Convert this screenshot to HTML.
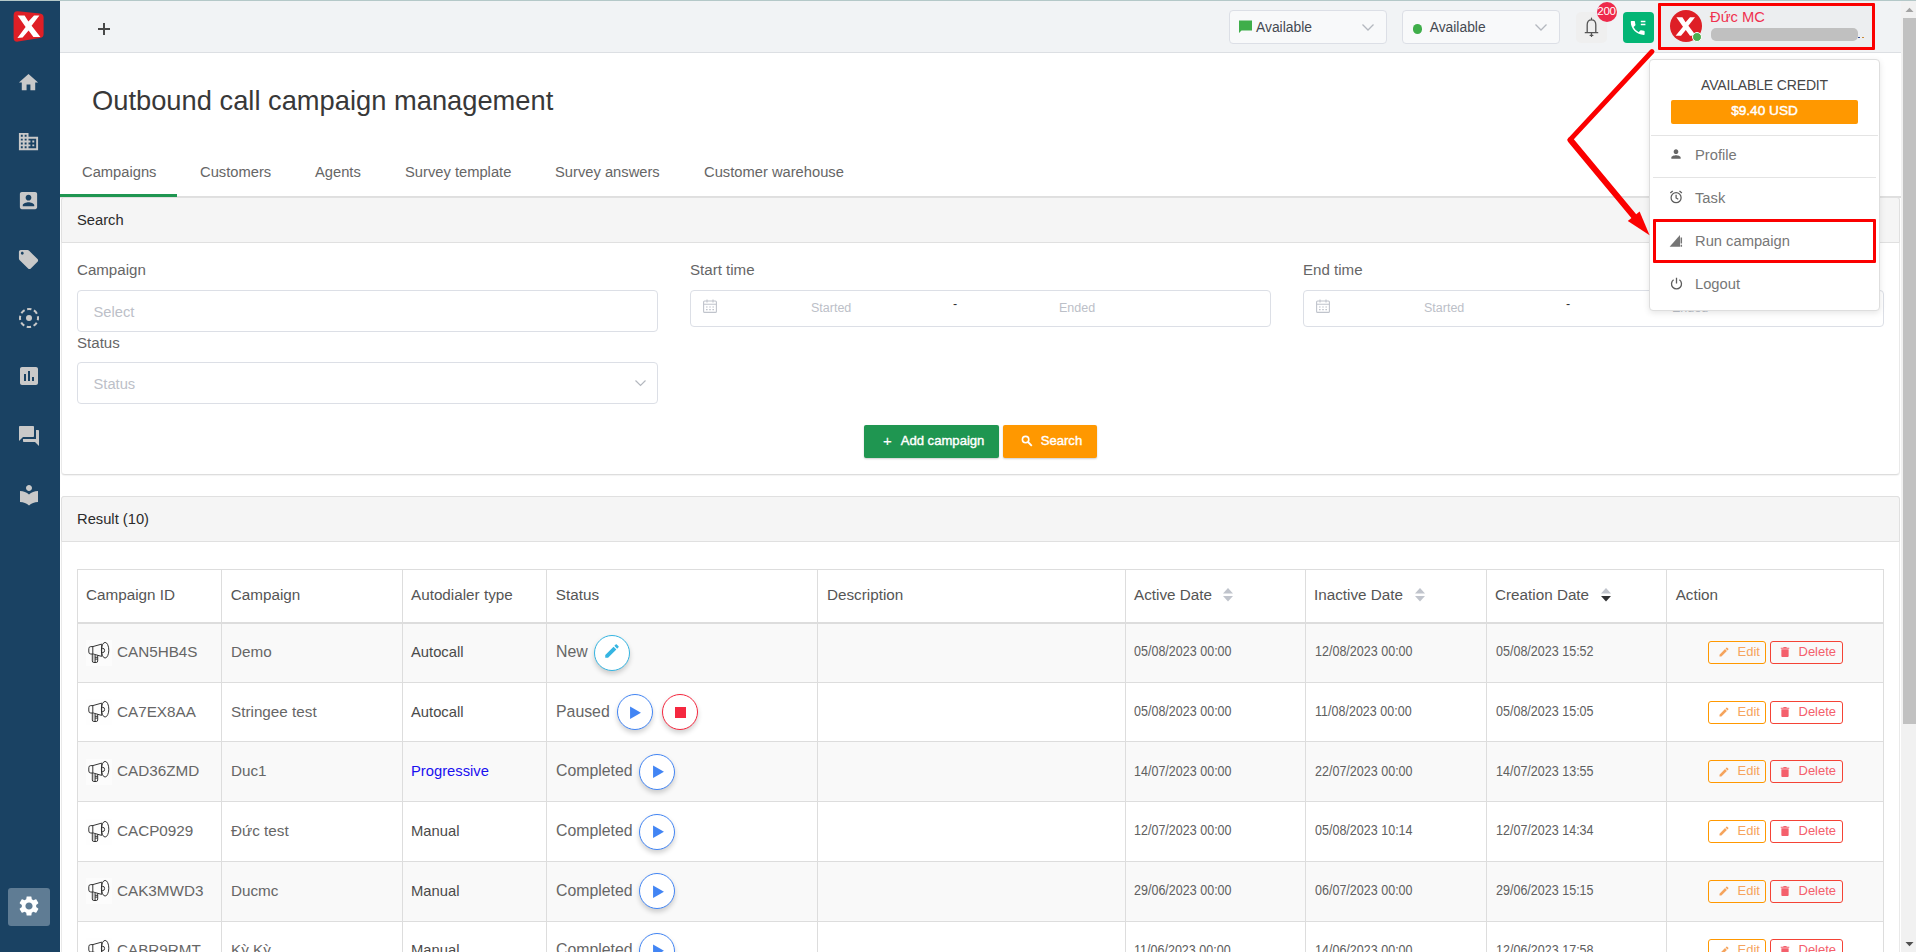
<!DOCTYPE html>
<html lang="en">
<head>
<meta charset="utf-8">
<title>Outbound call campaign management</title>
<style>
*{box-sizing:border-box;margin:0;padding:0}
html,body{width:1916px;height:952px;overflow:hidden;background:#fff}
body{font-family:"Liberation Sans",sans-serif;color:#606266;position:relative;font-size:15px}
.abs{position:absolute}
#topline{left:0;top:0;width:1916px;height:1px;background:#b4c8c8;z-index:50}
#sidebar{left:0;top:0;width:60px;height:952px;background:#1a4263}
#sidebar svg{position:absolute;fill:#c9c9c9}
#header{left:60px;top:0;width:1841px;height:53px;background:#f1f3f5;border-bottom:1px solid #dcdfe3}
#main{left:60px;top:53px;width:1840px;height:899px;background:#fff;overflow:hidden}
/* scrollbar */
#sb{left:1901px;top:0;width:15px;height:952px;background:#f1f1f1}
#sbthumb{left:1903px;top:18px;width:13px;height:706px;background:#c1c1c1}
/* header controls */
.hsel{top:10px;width:158px;height:34px;border:1px solid #dcdfe6;border-radius:4px;background:#f8f9fa;font-size:13.850px;color:#454a52}
.hsel span{position:absolute;top:8px;left:26px;line-height:16px}
.hsel svg{position:absolute}
/* page */
#title{left:92px;top:84px;font-size:27.3px;line-height:34px;color:#383838;white-space:nowrap}
.tab{top:163px;font-size:14.72px;line-height:18px;color:#666;white-space:nowrap}
#tabline{left:60px;top:196px;width:1841px;height:2px;background:#dfdfdf}
#tabactive{left:60px;top:194px;width:117px;height:3px;background:#1f9651}
.panelhead{left:61px;width:1839px;height:45.500px;background:#f5f5f5;border:1px solid #e0e0e0;border-radius:3px 3px 0 0;font-size:14.72px;color:#2b2b2b}
.panelhead span{position:absolute;left:15px;top:13px;line-height:18px}
.lbl{font-size:15.100px;line-height:18px;color:#666;white-space:nowrap}
.inp{height:42px;border:1px solid #dcdfe6;border-radius:4px;background:#fff;width:581px}
.inp .ph{position:absolute;left:15.500px;top:11.500px;font-size:14.720px;line-height:18px;color:#bcc0c8}
.drange{height:37px;border:1px solid #dcdfe6;border-radius:4px;background:#fff;width:581px;font-size:12.5px;color:#bcc0c8}
.drange span{position:absolute;top:10px;line-height:14px}
.btn{top:425px;height:33px;border-radius:2px;color:#fff;font-size:13.100px;font-weight:normal;-webkit-text-stroke:0.400px #fff;white-space:nowrap;box-shadow:0 1px 2px rgba(0,0,0,.2)}
.hl{left:77px;width:1807px;height:1px;background:#dddddd}
.vl{top:569px;width:1px;height:400px;background:#dddddd}
.th{top:586px;font-size:15.250px;line-height:18px;color:#555;white-space:nowrap}
.td{font-size:15.250px;line-height:18px;color:#666;white-space:nowrap}
.dt{font-size:14px;line-height:18px;color:#606060;white-space:nowrap;transform:scaleX(.895);transform-origin:0 50%}
.cb{width:36px;height:36px;border-radius:50%;border:1px solid;background:#fff;box-shadow:0 3px 5px rgba(0,0,0,.18)}
.ab{height:23px;border:1px solid;border-radius:3px;font-size:13px;background:transparent}
.ab span{position:absolute;top:2.200px;line-height:15px}
.mi{left:1695px;font-size:14.720px;line-height:18px;color:#777;white-space:nowrap}
</style>
</head>
<body>
<div id="sidebar" class="abs">
<svg style="left:13px;top:10px;fill:none" width="32" height="33" viewBox="0 0 32 33"><path d="M5 1.2 L27 3.6 Q30.6 4 30.6 7.6 L30.6 24 Q30.6 27.4 27 28 L5 31.6 Q0.6 32 0.6 28 L0.6 5.4 Q0.6 0.8 5 1.2Z" fill="#df1f26"/><path d="M4.6 5.6 L11.6 5.6 L15.4 11.6 L21 5.6 L26.4 5.6 L18.6 15.8 L27.4 27 L20.4 27 L15.6 20.4 L9.6 27.4 L4.4 28 L12.6 17 Z" fill="#fff"/></svg>
<svg style="left:17.300px;top:70.6px" width="23" height="23" viewBox="0 0 24 24"><path d="M10 20v-6h4v6h5v-8h3L12 3 2 12h3v8z"/></svg>
<svg style="left:17.300px;top:129.6px" width="23" height="23" viewBox="0 0 24 24"><path d="M12 7V3H2v18h20V7H12zM6 19H4v-2h2v2zm0-4H4v-2h2v2zm0-4H4V9h2v2zm0-4H4V5h2v2zm4 12H8v-2h2v2zm0-4H8v-2h2v2zm0-4H8V9h2v2zm0-4H8V5h2v2zm10 12h-8v-2h2v-2h-2v-2h2v-2h-2V9h8v10zm-2-8h-2v2h2v-2zm0 4h-2v2h2v-2z"/></svg>
<svg style="left:17.300px;top:188.6px" width="23" height="23" viewBox="0 0 24 24"><path d="M3 5v14c0 1.100.89 2 2 2h14c1.100 0 2-.9 2-2V5c0-1.100-.9-2-2-2H5c-1.110 0-2 .9-2 2zm12 4c0 1.660-1.340 3-3 3s-3-1.340-3-3 1.340-3 3-3 3 1.340 3 3zm-9 8c0-2 4-3.100 6-3.100s6 1.100 6 3.100v1H6v-1z"/></svg>
<svg style="left:17.300px;top:247.6px" width="23" height="23" viewBox="0 0 24 24"><path d="M21.410 11.580l-9-9C12.050 2.220 11.550 2 11 2H4c-1.100 0-2 .9-2 2v7c0 .55.220 1.050.59 1.420l9 9c.36.360.86.580 1.410.580.550 0 1.050-.220 1.410-.59l7-7c.370-.360.590-.860.590-1.410 0-.550-.23-1.060-.59-1.420zM5.500 7C4.670 7 4 6.330 4 5.500S4.670 4 5.500 4 7 4.670 7 5.500 6.330 7 5.500 7z"/></svg>
<svg style="left:16.700px;top:305.500px;fill:none;stroke:#c9c9c9" width="24" height="24" viewBox="0 0 24 24"><circle cx="12" cy="12" r="9" stroke-width="2" stroke-dasharray="4.400 2.670" stroke-dashoffset="2.200"/><circle cx="12" cy="12" r="3" fill="#c9c9c9" stroke="none"/></svg>
<svg style="left:16.800px;top:364.300px" width="24" height="24" viewBox="0 0 24 24"><path d="M19 3H5c-1.100 0-2 .9-2 2v14c0 1.100.9 2 2 2h14c1.100 0 2-.9 2-2V5c0-1.100-.9-2-2-2zM9 17H7v-7h2v7zm4 0h-2V7h2v10zm4 0h-2v-4h2v4z"/></svg>
<svg style="left:16.800px;top:423.500px" width="24" height="24" viewBox="0 0 24 24"><path d="M21 6h-2v9H6v2c0 .55.450 1 1 1h11l4 4V7c0-.55-.45-1-1-1zm-4 6V3c0-.55-.45-1-1-1H3c-.55 0-1 .45-1 1v14l4-4h10c.550 0 1-.45 1-1z"/></svg>
<svg style="left:16.800px;top:482.800px" width="24" height="24" viewBox="0 0 24 24"><path d="M12 11.550C9.640 9.350 6.480 8 3 8v11c3.480 0 6.640 1.350 9 3.550 2.360-2.190 5.520-3.550 9-3.550V8c-3.480 0-6.640 1.350-9 3.550zM12 8c1.660 0 3-1.340 3-3s-1.340-3-3-3-3 1.340-3 3 1.340 3 3 3z"/></svg>
<div class="abs" style="left:8px;top:888px;width:42px;height:38px;background:#5f7c94;border-radius:3px"></div>
<svg style="left:16.800px;top:894.300px;fill:#fff" width="24" height="24" viewBox="0 0 24 24"><path d="M19.140 12.940c.04-.3.060-.61.060-.940 0-.320-.020-.640-.070-.940l2.030-1.580c.180-.140.230-.410.120-.610l-1.920-3.320c-.12-.22-.37-.29-.59-.22l-2.390.96c-.5-.38-1.030-.7-1.620-.94l-.36-2.540c-.04-.24-.24-.41-.48-.41h-3.840c-.24 0-.43.170-.47.410l-.36 2.540c-.59.240-1.130.570-1.620.94l-2.390-.96c-.22-.08-.47 0-.59.220L2.740 8.870c-.12.210-.08.470.12.610l2.030 1.580c-.05.300-.09.630-.09.940s.020.640.070.940l-2.030 1.580c-.18.140-.23.410-.12.610l1.920 3.320c.12.220.37.290.59.220l2.390-.96c.5.380 1.030.7 1.620.94l.36 2.540c.05.240.24.410.48.410h3.840c.24 0 .44-.17.470-.41l.36-2.540c.59-.24 1.130-.56 1.620-.94l2.390.96c.22.080.47 0 .59-.22l1.920-3.320c.12-.22.070-.47-.12-.61l-2.010-1.580zM12 15.600c-1.980 0-3.600-1.620-3.600-3.600s1.620-3.600 3.600-3.600 3.600 1.620 3.600 3.600-1.620 3.600-3.600 3.600z"/></svg>
</div>
<div id="header" class="abs"></div>
<div class="abs" style="left:97.500px;top:22.500px;width:12.500px;height:12.500px"><div class="abs" style="left:0;top:5.450px;width:12.500px;height:1.600px;background:#484848"></div><div class="abs" style="left:5.450px;top:0;width:1.600px;height:12.500px;background:#484848"></div></div>
<div class="abs hsel" style="left:1229px"><svg style="left:8px;top:8px" width="15" height="15" viewBox="0 0 15 15"><path d="M1 1.500h13v10H3.500L1 14z" fill="#3fae4a"/></svg><span>Available</span><svg style="left:131px;top:12px" width="14" height="9" viewBox="0 0 14 9"><path d="M1.500 1.500l5.500 5.500 5.500-5.500" fill="none" stroke="#b4b8bf" stroke-width="1.300"/></svg></div>
<div class="abs hsel" style="left:1402px"><div class="abs" style="left:9.700px;top:13.200px;width:9.600px;height:9.600px;border-radius:50%;background:#3fae4a"></div><span style="left:26.700px">Available</span><svg style="left:131px;top:12px" width="14" height="9" viewBox="0 0 14 9"><path d="M1.500 1.500l5.500 5.500 5.500-5.500" fill="none" stroke="#b4b8bf" stroke-width="1.300"/></svg></div>
<div class="abs" style="left:1576px;top:12px;width:31px;height:31px;border-radius:5px;background:#efefef"></div>
<svg class="abs" style="left:1583px;top:17px" width="17" height="21" viewBox="0 0 17 21"><path d="M8.500 1.200v1.600M8.500 2.800c-2.700 0-4.300 2.200-4.300 5v7.900h8.600V7.800c0-2.800-1.600-5-4.300-5zM2.300 15.700h12.400M8.500 16.400v3M7.200 18.400h2.600" fill="none" stroke="#555" stroke-width="1.300" stroke-linejoin="round" stroke-linecap="round"/></svg>
<div class="abs" style="left:1596.700px;top:2px;width:20px;height:20px;border-radius:50%;background:#ee2a4b"></div>
<div class="abs" style="left:1594px;top:3.200px;width:25px;text-align:center;font-size:11.600px;line-height:15px;color:#fff;letter-spacing:-0.300px">200</div>
<div class="abs" style="left:1623px;top:12px;width:31px;height:31px;border-radius:4px;background:#03b575"></div>
<svg class="abs" style="left:1629.800px;top:18.200px" width="18.500" height="18.500" viewBox="0 0 24 24"><path d="M6.620 10.790c1.440 2.830 3.760 5.140 6.590 6.590l2.200-2.200c.27-.27.670-.36 1.020-.24 1.120.37 2.330.57 3.570.57.550 0 1 .45 1 1V20c0 .55-.45 1-1 1-9.390 0-17-7.610-17-17 0-.55.45-1 1-1h3.500c.55 0 1 .45 1 1 0 1.250.2 2.450.57 3.570.11.350.030.740-.25 1.020l-2.200 2.200z" fill="#fff" transform="translate(-2,1)"/><path d="M14 4.500h6M14 8.500h6" stroke="#fff" stroke-width="1.800"/></svg>
<div class="abs" style="left:1661px;top:6px;width:211px;height:41px;background:#eceef0"></div>
<div class="abs" style="left:1669.600px;top:10px;width:32px;height:32px;border-radius:50%;background:#de1f26"></div>
<svg class="abs" style="left:1673px;top:15px" width="26" height="24" viewBox="0 0 26 26" preserveAspectRatio="none"><path d="M3.400 2.400 L9.400 2.400 L12.600 7.800 L17 2.400 L22 2.400 L15.400 11.600 L23 22.400 L17 22.400 L12.800 16.200 L8 22.400 L2.600 22.400 L10 12.600 Z" fill="#fff"/></svg>
<div class="abs" style="left:1691.500px;top:32px;width:10px;height:10px;border-radius:50%;background:#4caf50;border:1.500px solid #fff"></div>
<div class="abs" style="left:1710px;top:8px;font-size:14.720px;line-height:18px;color:#f0314f;white-space:nowrap">Đức MC</div>
<div class="abs" style="left:1711px;top:28px;width:147px;height:13px;border-radius:5px;background:#c0c0c0"></div>
<div class="abs" style="left:1858px;top:36.500px;width:1.500px;height:1.500px;background:#34509a"></div>
<div class="abs" style="left:1862px;top:36.500px;width:1.500px;height:1.500px;background:#c98b3a"></div>
<div id="main" class="abs"></div>
<div id="title" class="abs">Outbound call campaign management</div>
<div class="abs tab" style="left:82px">Campaigns</div>
<div class="abs tab" style="left:200px">Customers</div>
<div class="abs tab" style="left:315px">Agents</div>
<div class="abs tab" style="left:405px">Survey template</div>
<div class="abs tab" style="left:555px">Survey answers</div>
<div class="abs tab" style="left:704px">Customer warehouse</div>
<div id="tabline" class="abs"></div>
<div id="tabactive" class="abs"></div>
<!-- search panel -->
<div class="abs" style="left:61px;top:197px;width:1839px;height:278px;border:1px solid #dddddd;border-left-color:#e9e9e9;border-right-color:#e9e9e9;border-radius:4px;background:#fff;box-shadow:0 1px 1px rgba(0,0,0,.05)"></div>
<div class="abs panelhead" style="top:197px"><span>Search</span></div>
<div class="abs lbl" style="left:77px;top:261px">Campaign</div>
<div class="abs inp" style="left:77px;top:290px"><span class="ph">Select</span></div>
<div class="abs lbl" style="left:77px;top:334px">Status</div>
<div class="abs inp" style="left:77px;top:362px"><span class="ph">Status</span><svg class="abs" style="left:555.500px;top:16px" width="13" height="9" viewBox="0 0 13 9"><path d="M1.500 1.500l5 5 5-5" fill="none" stroke="#b4b8bf" stroke-width="1.200"/></svg></div>
<div class="abs lbl" style="left:690px;top:261px">Start time</div>
<div class="abs drange" style="left:690px;top:290px"><svg class="abs" style="left:11.700px;top:8.300px" width="14" height="14" viewBox="0 0 14 14"><rect x="0.600" y="2" width="12.800" height="11.400" rx="1" fill="none" stroke="#c0c4cc" stroke-width="1.100"/><path d="M0.600 5.200h12.800M4 0.400v3M10 0.400v3" stroke="#c0c4cc" stroke-width="1.100" fill="none"/><path d="M3 8h1.600M6.200 8h1.600M9.400 8h1.600M3 10.600h1.600M6.200 10.600h1.600M9.400 10.600h1.600" stroke="#c0c4cc" stroke-width="1.200"/></svg><span style="left:120px">Started</span><span style="left:262px;color:#303133;top:6px">-</span><span style="left:368px">Ended</span></div>
<div class="abs lbl" style="left:1303px;top:261px">End time</div>
<div class="abs drange" style="left:1303px;top:290px"><svg class="abs" style="left:11.700px;top:8.300px" width="14" height="14" viewBox="0 0 14 14"><rect x="0.600" y="2" width="12.800" height="11.400" rx="1" fill="none" stroke="#c0c4cc" stroke-width="1.100"/><path d="M0.600 5.200h12.800M4 0.400v3M10 0.400v3" stroke="#c0c4cc" stroke-width="1.100" fill="none"/><path d="M3 8h1.600M6.200 8h1.600M9.400 8h1.600M3 10.600h1.600M6.200 10.600h1.600M9.400 10.600h1.600" stroke="#c0c4cc" stroke-width="1.200"/></svg><span style="left:120px">Started</span><span style="left:262px;color:#303133;top:6px">-</span><span style="left:368px">Ended</span></div>
<div class="abs btn" style="left:864px;width:135px;background:#1f9651"><span class="abs" style="left:19px;top:7px;font-weight:normal;-webkit-text-stroke:0.150px #fff;font-size:15px;line-height:18px">+</span><span class="abs" style="left:36.700px;top:8px;line-height:16px">Add campaign</span></div>
<div class="abs btn" style="left:1003px;width:94px;background:#ff9800"><svg class="abs" style="left:18px;top:10px" width="12" height="12" viewBox="0 0 12 12"><circle cx="4.600" cy="4.600" r="3.200" fill="none" stroke="#fff" stroke-width="1.600"/><path d="M7 7l3.800 3.800" stroke="#fff" stroke-width="1.800"/></svg><span class="abs" style="left:37.700px;top:8px;line-height:16px">Search</span></div>
<!-- result panel -->
<div class="abs" style="left:61px;top:496px;width:1839px;height:470px;border:1px solid #dddddd;border-left-color:#e9e9e9;border-right-color:#e9e9e9;border-radius:4px;background:#fff"></div>
<div class="abs panelhead" style="top:496px"><span>Result (10)</span></div>
<!--TABLE-->
<div id="tbl" class="abs" style="left:0;top:0;width:1900px;height:952px;overflow:hidden">
<div class="abs" style="left:78px;top:624px;width:1805px;height:58px;background:#f9f9f9"></div>
<div class="abs" style="left:78px;top:683px;width:1805px;height:58px;background:#fff"></div>
<div class="abs" style="left:78px;top:742px;width:1805px;height:59px;background:#f9f9f9"></div>
<div class="abs" style="left:78px;top:802px;width:1805px;height:59px;background:#fff"></div>
<div class="abs" style="left:78px;top:862px;width:1805px;height:59px;background:#f9f9f9"></div>
<div class="abs" style="left:78px;top:922px;width:1805px;height:59px;background:#fff"></div>
<div class="abs hl" style="top:569px"></div>
<div class="abs hl" style="top:622px;height:2px"></div>
<div class="abs hl" style="top:682px"></div>
<div class="abs hl" style="top:741px"></div>
<div class="abs hl" style="top:801px"></div>
<div class="abs hl" style="top:861px"></div>
<div class="abs hl" style="top:921px"></div>
<div class="abs hl" style="top:981px"></div>
<div class="abs vl" style="left:77px"></div>
<div class="abs vl" style="left:221px"></div>
<div class="abs vl" style="left:402px"></div>
<div class="abs vl" style="left:546px"></div>
<div class="abs vl" style="left:817px"></div>
<div class="abs vl" style="left:1125px"></div>
<div class="abs vl" style="left:1305px"></div>
<div class="abs vl" style="left:1486px"></div>
<div class="abs vl" style="left:1666px"></div>
<div class="abs vl" style="left:1883px"></div>
<div class="abs th" style="left:86.0px">Campaign ID</div>
<div class="abs th" style="left:230.8px">Campaign</div>
<div class="abs th" style="left:411.0px">Autodialer type</div>
<div class="abs th" style="left:555.8px">Status</div>
<div class="abs th" style="left:827.0px">Description</div>
<div class="abs th" style="left:1134.0px">Active Date</div>
<div class="abs th" style="left:1314.0px">Inactive Date</div>
<div class="abs th" style="left:1495.0px">Creation Date</div>
<div class="abs th" style="left:1675.7px">Action</div>
<svg class="abs" style="left:1222px;top:587px" width="12" height="16" viewBox="0 0 12 16"><path d="M1 6.500L6 1l5 5.500z" fill="#c0c4cc"/><path d="M1 9L6 14.500 11 9z" fill="#c0c4cc"/></svg>
<svg class="abs" style="left:1414px;top:587px" width="12" height="16" viewBox="0 0 12 16"><path d="M1 6.500L6 1l5 5.500z" fill="#c0c4cc"/><path d="M1 9L6 14.500 11 9z" fill="#c0c4cc"/></svg>
<svg class="abs" style="left:1600px;top:587px" width="12" height="16" viewBox="0 0 12 16"><path d="M1 6.500L6 1l5 5.500z" fill="#c0c4cc"/><path d="M1 9L6 14.500 11 9z" fill="#303133"/></svg>
<svg class="abs" style="left:86px;top:639.60px" width="26" height="26" viewBox="0 0 26 26"><rect width="26" height="26" fill="#fdfdfd" opacity=".6"/><g fill="none" stroke="#2b2b2b" stroke-width="0.950" stroke-linejoin="round"><path d="M7 6.600h-2.200a2 2 0 0 0-2 2v3.400a2 2 0 0 0 2 2H7"/><path d="M6.800 6.600L15.700 4.100v12.300L6.800 13.900z"/><ellipse cx="19.100" cy="10.200" rx="3.700" ry="7.800"/><path d="M15.700 8.300h1a1.900 2.150 0 0 1 0 4.300h-1"/><path d="M6.300 14v7a1.500 1.500 0 0 0 1.500 1.500h2.400a1.500 1.500 0 0 0 1.500-1.500v-5.700"/><path d="M9.100 14.800v7.500M9.100 17.300h2.500M9.100 19.100h2.500"/></g><path d="M6.800 14.500h2v7.500h-1.500z" fill="#999" opacity=".5"/></svg>
<div class="abs td" style="left:117px;top:642.80px">CAN5HB4S</div>
<div class="abs td" style="left:231px;top:642.80px">Demo</div>
<div class="abs td" style="left:411px;top:642.80px;font-size:14.780px;color:#4a4a4a">Autocall</div>
<div class="abs td" style="left:556px;top:642.80px;font-size:15.850px">New</div>
<div class="abs cb" style="left:593.50px;top:634.60px;border-color:#35b5e2"><svg class="abs" style="left:8.300px;top:6.700px" width="18" height="18" viewBox="0 0 24 24"><path d="M3 17.250V21h3.750L17.810 9.940l-3.750-3.750L3 17.250zM20.710 7.040c.39-.39.39-1.020 0-1.410l-2.340-2.340c-.39-.39-1.020-.39-1.410 0l-1.830 1.830 3.750 3.750 1.830-1.830z" fill="#35b5e2"/></svg></div>
<div class="abs dt" style="left:1134px;top:642.10px">05/08/2023 00:00</div>
<div class="abs dt" style="left:1315px;top:642.10px">12/08/2023 00:00</div>
<div class="abs dt" style="left:1496px;top:642.10px">05/08/2023 15:52</div>
<div class="abs ab" style="left:1708px;top:640.80px;width:58px;border-color:#ff9800;color:#f5a45d"><svg class="abs" style="left:9px;top:4.500px" width="12" height="12" viewBox="0 0 24 24"><path d="M3 17.250V21h3.750L17.810 9.940l-3.750-3.750L3 17.250zM20.710 7.040c.39-.39.39-1.020 0-1.410l-2.340-2.340c-.39-.39-1.020-.39-1.410 0l-1.830 1.830 3.750 3.750 1.830-1.830z" fill="#f5a45d"/></svg><span style="left:28.500px">Edit</span></div>
<div class="abs ab" style="left:1770px;top:640.80px;width:73px;border-color:#f44336;color:#f4606c"><svg class="abs" style="left:9px;top:4.500px" width="10" height="12" viewBox="0 0 11 12"><path d="M1.500 3h8v7.500q0 1-1 1h-6q-1 0-1-1zM0.800 1.200h2.700l.5-.8h3l.5.800h2.700v1.300H0.800z" fill="#f4606c"/></svg><span style="left:27.500px">Delete</span></div>
<svg class="abs" style="left:86px;top:699.30px" width="26" height="26" viewBox="0 0 26 26"><rect width="26" height="26" fill="#fdfdfd" opacity=".6"/><g fill="none" stroke="#2b2b2b" stroke-width="0.950" stroke-linejoin="round"><path d="M7 6.600h-2.200a2 2 0 0 0-2 2v3.400a2 2 0 0 0 2 2H7"/><path d="M6.800 6.600L15.700 4.100v12.300L6.800 13.900z"/><ellipse cx="19.100" cy="10.200" rx="3.700" ry="7.800"/><path d="M15.700 8.300h1a1.900 2.150 0 0 1 0 4.300h-1"/><path d="M6.300 14v7a1.500 1.500 0 0 0 1.500 1.500h2.400a1.500 1.500 0 0 0 1.500-1.500v-5.700"/><path d="M9.100 14.800v7.500M9.100 17.300h2.500M9.100 19.100h2.500"/></g><path d="M6.800 14.500h2v7.500h-1.500z" fill="#999" opacity=".5"/></svg>
<div class="abs td" style="left:117px;top:702.50px">CA7EX8AA</div>
<div class="abs td" style="left:231px;top:702.50px">Stringee test</div>
<div class="abs td" style="left:411px;top:702.50px;font-size:14.780px;color:#4a4a4a">Autocall</div>
<div class="abs td" style="left:556px;top:702.50px;font-size:15.850px">Paused</div>
<div class="abs cb" style="left:617.20px;top:694.30px;border-color:#4285f4"><svg class="abs" style="left:11.300px;top:10.300px" width="12.500" height="13.500" viewBox="0 0 12 13"><path d="M1 0.500L11.500 6.500 1 12.500z" fill="#4285f4"/></svg></div>
<div class="abs cb" style="left:662.20px;top:694.30px;border-color:#f5283f"><div class="abs" style="left:12px;top:12px;width:10.500px;height:10.500px;background:#f5283f"></div></div>
<div class="abs dt" style="left:1134px;top:701.80px">05/08/2023 00:00</div>
<div class="abs dt" style="left:1315px;top:701.80px">11/08/2023 00:00</div>
<div class="abs dt" style="left:1496px;top:701.80px">05/08/2023 15:05</div>
<div class="abs ab" style="left:1708px;top:700.50px;width:58px;border-color:#ff9800;color:#f5a45d"><svg class="abs" style="left:9px;top:4.500px" width="12" height="12" viewBox="0 0 24 24"><path d="M3 17.250V21h3.750L17.810 9.940l-3.750-3.750L3 17.250zM20.710 7.040c.39-.39.39-1.020 0-1.410l-2.340-2.340c-.39-.39-1.020-.39-1.410 0l-1.830 1.830 3.750 3.750 1.830-1.830z" fill="#f5a45d"/></svg><span style="left:28.500px">Edit</span></div>
<div class="abs ab" style="left:1770px;top:700.50px;width:73px;border-color:#f44336;color:#f4606c"><svg class="abs" style="left:9px;top:4.500px" width="10" height="12" viewBox="0 0 11 12"><path d="M1.500 3h8v7.500q0 1-1 1h-6q-1 0-1-1zM0.800 1.200h2.700l.5-.8h3l.5.800h2.700v1.300H0.800z" fill="#f4606c"/></svg><span style="left:27.500px">Delete</span></div>
<svg class="abs" style="left:86px;top:759.00px" width="26" height="26" viewBox="0 0 26 26"><rect width="26" height="26" fill="#fdfdfd" opacity=".6"/><g fill="none" stroke="#2b2b2b" stroke-width="0.950" stroke-linejoin="round"><path d="M7 6.600h-2.200a2 2 0 0 0-2 2v3.400a2 2 0 0 0 2 2H7"/><path d="M6.800 6.600L15.700 4.100v12.300L6.800 13.900z"/><ellipse cx="19.100" cy="10.200" rx="3.700" ry="7.800"/><path d="M15.700 8.300h1a1.900 2.150 0 0 1 0 4.300h-1"/><path d="M6.300 14v7a1.500 1.500 0 0 0 1.500 1.500h2.400a1.500 1.500 0 0 0 1.500-1.500v-5.700"/><path d="M9.100 14.800v7.500M9.100 17.300h2.500M9.100 19.100h2.500"/></g><path d="M6.800 14.500h2v7.500h-1.500z" fill="#999" opacity=".5"/></svg>
<div class="abs td" style="left:117px;top:762.20px">CAD36ZMD</div>
<div class="abs td" style="left:231px;top:762.20px">Duc1</div>
<div class="abs td" style="left:411px;top:762.20px;font-size:14.780px;color:#1a10f0">Progressive</div>
<div class="abs td" style="left:556px;top:762.20px;font-size:15.850px">Completed</div>
<div class="abs cb" style="left:639.40px;top:754.00px;border-color:#4285f4"><svg class="abs" style="left:11.300px;top:10.300px" width="12.500" height="13.500" viewBox="0 0 12 13"><path d="M1 0.500L11.500 6.500 1 12.500z" fill="#4285f4"/></svg></div>
<div class="abs dt" style="left:1134px;top:761.50px">14/07/2023 00:00</div>
<div class="abs dt" style="left:1315px;top:761.50px">22/07/2023 00:00</div>
<div class="abs dt" style="left:1496px;top:761.50px">14/07/2023 13:55</div>
<div class="abs ab" style="left:1708px;top:760.20px;width:58px;border-color:#ff9800;color:#f5a45d"><svg class="abs" style="left:9px;top:4.500px" width="12" height="12" viewBox="0 0 24 24"><path d="M3 17.250V21h3.750L17.810 9.940l-3.750-3.750L3 17.250zM20.710 7.040c.39-.39.39-1.020 0-1.410l-2.340-2.340c-.39-.39-1.020-.39-1.410 0l-1.830 1.830 3.750 3.750 1.830-1.830z" fill="#f5a45d"/></svg><span style="left:28.500px">Edit</span></div>
<div class="abs ab" style="left:1770px;top:760.20px;width:73px;border-color:#f44336;color:#f4606c"><svg class="abs" style="left:9px;top:4.500px" width="10" height="12" viewBox="0 0 11 12"><path d="M1.500 3h8v7.500q0 1-1 1h-6q-1 0-1-1zM0.800 1.200h2.700l.5-.8h3l.5.800h2.700v1.300H0.800z" fill="#f4606c"/></svg><span style="left:27.500px">Delete</span></div>
<svg class="abs" style="left:86px;top:818.70px" width="26" height="26" viewBox="0 0 26 26"><rect width="26" height="26" fill="#fdfdfd" opacity=".6"/><g fill="none" stroke="#2b2b2b" stroke-width="0.950" stroke-linejoin="round"><path d="M7 6.600h-2.200a2 2 0 0 0-2 2v3.400a2 2 0 0 0 2 2H7"/><path d="M6.800 6.600L15.700 4.100v12.300L6.800 13.900z"/><ellipse cx="19.100" cy="10.200" rx="3.700" ry="7.800"/><path d="M15.700 8.300h1a1.900 2.150 0 0 1 0 4.300h-1"/><path d="M6.300 14v7a1.500 1.500 0 0 0 1.500 1.500h2.400a1.500 1.500 0 0 0 1.500-1.500v-5.700"/><path d="M9.100 14.800v7.500M9.100 17.300h2.500M9.100 19.100h2.500"/></g><path d="M6.800 14.500h2v7.500h-1.500z" fill="#999" opacity=".5"/></svg>
<div class="abs td" style="left:117px;top:821.90px">CACP0929</div>
<div class="abs td" style="left:231px;top:821.90px">Đức test</div>
<div class="abs td" style="left:411px;top:821.90px;font-size:14.780px;color:#4a4a4a">Manual</div>
<div class="abs td" style="left:556px;top:821.90px;font-size:15.850px">Completed</div>
<div class="abs cb" style="left:639.40px;top:813.70px;border-color:#4285f4"><svg class="abs" style="left:11.300px;top:10.300px" width="12.500" height="13.500" viewBox="0 0 12 13"><path d="M1 0.500L11.500 6.500 1 12.500z" fill="#4285f4"/></svg></div>
<div class="abs dt" style="left:1134px;top:821.20px">12/07/2023 00:00</div>
<div class="abs dt" style="left:1315px;top:821.20px">05/08/2023 10:14</div>
<div class="abs dt" style="left:1496px;top:821.20px">12/07/2023 14:34</div>
<div class="abs ab" style="left:1708px;top:819.90px;width:58px;border-color:#ff9800;color:#f5a45d"><svg class="abs" style="left:9px;top:4.500px" width="12" height="12" viewBox="0 0 24 24"><path d="M3 17.250V21h3.750L17.810 9.940l-3.750-3.750L3 17.250zM20.710 7.040c.39-.39.39-1.020 0-1.410l-2.340-2.340c-.39-.39-1.020-.39-1.410 0l-1.830 1.830 3.750 3.750 1.830-1.830z" fill="#f5a45d"/></svg><span style="left:28.500px">Edit</span></div>
<div class="abs ab" style="left:1770px;top:819.90px;width:73px;border-color:#f44336;color:#f4606c"><svg class="abs" style="left:9px;top:4.500px" width="10" height="12" viewBox="0 0 11 12"><path d="M1.500 3h8v7.500q0 1-1 1h-6q-1 0-1-1zM0.800 1.200h2.700l.5-.8h3l.5.800h2.700v1.300H0.800z" fill="#f4606c"/></svg><span style="left:27.500px">Delete</span></div>
<svg class="abs" style="left:86px;top:878.40px" width="26" height="26" viewBox="0 0 26 26"><rect width="26" height="26" fill="#fdfdfd" opacity=".6"/><g fill="none" stroke="#2b2b2b" stroke-width="0.950" stroke-linejoin="round"><path d="M7 6.600h-2.200a2 2 0 0 0-2 2v3.400a2 2 0 0 0 2 2H7"/><path d="M6.800 6.600L15.700 4.100v12.300L6.800 13.900z"/><ellipse cx="19.100" cy="10.200" rx="3.700" ry="7.800"/><path d="M15.700 8.300h1a1.900 2.150 0 0 1 0 4.300h-1"/><path d="M6.300 14v7a1.500 1.500 0 0 0 1.500 1.500h2.400a1.500 1.500 0 0 0 1.500-1.500v-5.700"/><path d="M9.100 14.800v7.500M9.100 17.300h2.500M9.100 19.100h2.500"/></g><path d="M6.800 14.500h2v7.500h-1.500z" fill="#999" opacity=".5"/></svg>
<div class="abs td" style="left:117px;top:881.60px">CAK3MWD3</div>
<div class="abs td" style="left:231px;top:881.60px">Ducmc</div>
<div class="abs td" style="left:411px;top:881.60px;font-size:14.780px;color:#4a4a4a">Manual</div>
<div class="abs td" style="left:556px;top:881.60px;font-size:15.850px">Completed</div>
<div class="abs cb" style="left:639.40px;top:873.40px;border-color:#4285f4"><svg class="abs" style="left:11.300px;top:10.300px" width="12.500" height="13.500" viewBox="0 0 12 13"><path d="M1 0.500L11.500 6.500 1 12.500z" fill="#4285f4"/></svg></div>
<div class="abs dt" style="left:1134px;top:880.90px">29/06/2023 00:00</div>
<div class="abs dt" style="left:1315px;top:880.90px">06/07/2023 00:00</div>
<div class="abs dt" style="left:1496px;top:880.90px">29/06/2023 15:15</div>
<div class="abs ab" style="left:1708px;top:879.60px;width:58px;border-color:#ff9800;color:#f5a45d"><svg class="abs" style="left:9px;top:4.500px" width="12" height="12" viewBox="0 0 24 24"><path d="M3 17.250V21h3.750L17.810 9.940l-3.750-3.750L3 17.250zM20.710 7.040c.39-.39.39-1.020 0-1.410l-2.340-2.340c-.39-.39-1.020-.39-1.410 0l-1.830 1.830 3.750 3.750 1.830-1.830z" fill="#f5a45d"/></svg><span style="left:28.500px">Edit</span></div>
<div class="abs ab" style="left:1770px;top:879.60px;width:73px;border-color:#f44336;color:#f4606c"><svg class="abs" style="left:9px;top:4.500px" width="10" height="12" viewBox="0 0 11 12"><path d="M1.500 3h8v7.500q0 1-1 1h-6q-1 0-1-1zM0.800 1.200h2.700l.5-.8h3l.5.800h2.700v1.300H0.800z" fill="#f4606c"/></svg><span style="left:27.500px">Delete</span></div>
<svg class="abs" style="left:86px;top:938.10px" width="26" height="26" viewBox="0 0 26 26"><rect width="26" height="26" fill="#fdfdfd" opacity=".6"/><g fill="none" stroke="#2b2b2b" stroke-width="0.950" stroke-linejoin="round"><path d="M7 6.600h-2.200a2 2 0 0 0-2 2v3.400a2 2 0 0 0 2 2H7"/><path d="M6.800 6.600L15.700 4.100v12.300L6.800 13.900z"/><ellipse cx="19.100" cy="10.200" rx="3.700" ry="7.800"/><path d="M15.700 8.300h1a1.900 2.150 0 0 1 0 4.300h-1"/><path d="M6.300 14v7a1.500 1.500 0 0 0 1.500 1.500h2.400a1.500 1.500 0 0 0 1.500-1.500v-5.700"/><path d="M9.100 14.800v7.500M9.100 17.300h2.500M9.100 19.100h2.500"/></g><path d="M6.800 14.500h2v7.500h-1.500z" fill="#999" opacity=".5"/></svg>
<div class="abs td" style="left:117px;top:941.30px">CABR9RMT</div>
<div class="abs td" style="left:231px;top:941.30px">Kỳ Kỳ</div>
<div class="abs td" style="left:411px;top:941.30px;font-size:14.780px;color:#4a4a4a">Manual</div>
<div class="abs td" style="left:556px;top:941.30px;font-size:15.850px">Completed</div>
<div class="abs cb" style="left:639.40px;top:933.10px;border-color:#4285f4"><svg class="abs" style="left:11.300px;top:10.300px" width="12.500" height="13.500" viewBox="0 0 12 13"><path d="M1 0.500L11.500 6.500 1 12.500z" fill="#4285f4"/></svg></div>
<div class="abs dt" style="left:1134px;top:940.60px">11/06/2023 00:00</div>
<div class="abs dt" style="left:1315px;top:940.60px">14/06/2023 00:00</div>
<div class="abs dt" style="left:1496px;top:940.60px">12/06/2023 17:58</div>
<div class="abs ab" style="left:1708px;top:939.30px;width:58px;border-color:#ff9800;color:#f5a45d"><svg class="abs" style="left:9px;top:4.500px" width="12" height="12" viewBox="0 0 24 24"><path d="M3 17.250V21h3.750L17.810 9.940l-3.750-3.750L3 17.250zM20.710 7.040c.39-.39.39-1.020 0-1.410l-2.340-2.340c-.39-.39-1.020-.39-1.410 0l-1.830 1.830 3.750 3.750 1.830-1.830z" fill="#f5a45d"/></svg><span style="left:28.500px">Edit</span></div>
<div class="abs ab" style="left:1770px;top:939.30px;width:73px;border-color:#f44336;color:#f4606c"><svg class="abs" style="left:9px;top:4.500px" width="10" height="12" viewBox="0 0 11 12"><path d="M1.500 3h8v7.500q0 1-1 1h-6q-1 0-1-1zM0.800 1.200h2.700l.5-.8h3l.5.800h2.700v1.300H0.800z" fill="#f4606c"/></svg><span style="left:27.500px">Delete</span></div>
</div>
<!--/TABLE-->
<!--DD-->
<div class="abs" style="left:1649px;top:59px;width:231px;height:252px;background:#fff;border-radius:4px;border:1px solid #dedede;box-shadow:0 2px 6px rgba(0,0,0,.10)"></div>
<div class="abs" style="left:1650px;top:76px;width:229px;text-align:center;font-size:14px;line-height:18px;color:#464646;letter-spacing:-0.150px">AVAILABLE CREDIT</div>
<div class="abs" style="left:1671px;top:100px;width:187px;height:24px;border-radius:2px;background:#ff9800;color:#fff;font-weight:normal;-webkit-text-stroke:0.450px #fff;font-size:13.650px;line-height:22.500px;text-align:center">$9.40 USD</div>
<div class="abs" style="left:1651px;top:135px;width:227px;height:1px;background:#e4e4e4"></div>
<div class="abs" style="left:1653px;top:177px;width:223px;height:1px;background:#e4e4e4"></div>
<svg class="abs" style="left:1669.400px;top:147.300px" width="14" height="14" viewBox="0 0 24 24"><path d="M12 12c2.210 0 4-1.790 4-4s-1.790-4-4-4-4 1.790-4 4 1.790 4 4 4zm0 2c-2.670 0-8 1.340-8 4v2h16v-2c0-2.660-5.330-4-8-4z" fill="#666"/></svg>
<div class="abs mi" style="top:146px">Profile</div>
<svg class="abs" style="left:1669.300px;top:190.300px" width="14.200" height="14.200" viewBox="0 0 13 13"><circle cx="6.500" cy="7" r="4.600" fill="none" stroke="#5c5c5c" stroke-width="1.150"/><path d="M6.500 4.300v3l2 1.200M1.200 2.800l2.200-1.800M11.800 2.800l-2.200-1.800" fill="none" stroke="#5c5c5c" stroke-width="1.150"/></svg>
<div class="abs mi" style="top:189px">Task</div>
<svg class="abs" style="left:1669px;top:234px" width="14" height="13" viewBox="0 0 14 13"><path d="M0.600 12.700L11 1.100v11.600z" fill="#757575"/><path d="M12.300 3.600v5.800M12.300 10.800v1.900" stroke="#757575" stroke-width="1.500"/></svg>
<div class="abs mi" style="top:232px">Run campaign</div>
<svg class="abs" style="left:1670px;top:277.200px" width="13" height="13" viewBox="0 0 13 13"><path d="M3.600 2.800a5 5 0 1 0 5.800 0M6.500 0.800v5.600" fill="none" stroke="#5c5c5c" stroke-width="1.300"/></svg>
<div class="abs mi" style="top:275px">Logout</div>
<!-- red annotations -->
<div class="abs" style="left:1658px;top:3px;width:217px;height:47px;border:3px solid #fb0000;border-radius:1px"></div>
<div class="abs" style="left:1653px;top:219px;width:223px;height:44px;border:3px solid #fb0000;border-radius:1px"></div>
<svg class="abs" style="left:1560px;top:40px" width="100" height="200" viewBox="1560 40 100 200"><path d="M1652 51.500L1570.200 139.600" fill="none" stroke="#fb0000" stroke-width="4.900" stroke-linecap="round"/><path d="M1570.500 140L1634.500 217" fill="none" stroke="#fb0000" stroke-width="6" stroke-linecap="round"/><path d="M1649.600 235.200L1627.800 220.900 1639.600 211.500z" fill="#fb0000"/></svg>
<!--/DD-->
<div id="sb" class="abs"></div>
<div id="sbthumb" class="abs"></div>
<svg class="abs" style="left:1905px;top:7px" width="9" height="6" viewBox="0 0 9 6"><path d="M0.500 5L4.500 0.800 8.500 5z" fill="#a3a3a3"/></svg>
<svg class="abs" style="left:1905px;top:941px" width="9" height="6" viewBox="0 0 9 6"><path d="M0.500 1L4.500 5.200 8.500 1z" fill="#505050"/></svg>
<div id="topline" class="abs"></div>
</body>
</html>
